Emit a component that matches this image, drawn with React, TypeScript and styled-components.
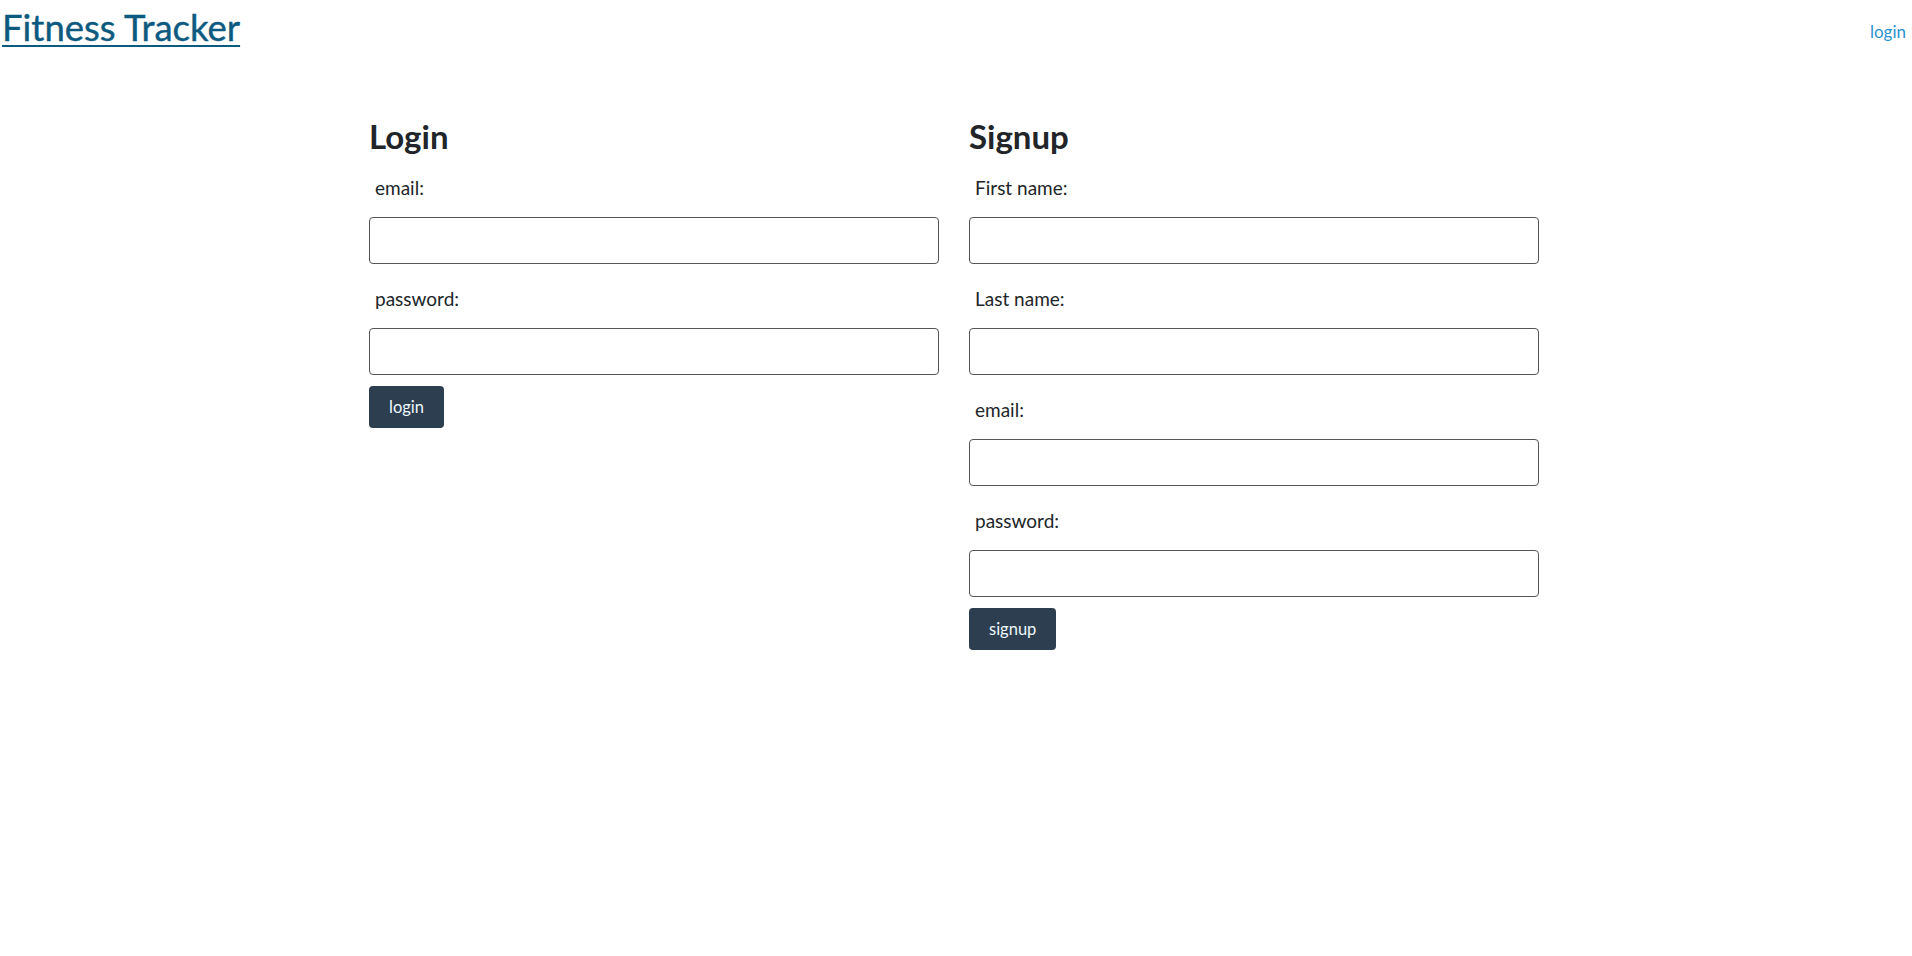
import React from "react";
import styled, { createGlobalStyle } from "styled-components";

const GlobalStyle = createGlobalStyle`
  html, body {
    margin: 0;
    padding: 0;
    background: #ffffff;
  }
  body {
    font-family: "Lato", "Noto Sans", sans-serif;
    color: #212529;
  }
  * { box-sizing: border-box; }
`;

const Header = styled.header`
  display: flex;
  justify-content: space-between;
  align-items: flex-start;
  padding: 0 6px 0 2px;
`;

const Brand = styled.a`
  display: inline-block;
  margin-top: 6px;
  font-size: 36.5px;
  line-height: 42px;
  font-weight: 400;
  -webkit-text-stroke: 0.4px #0d5a80;
  color: #0d5a80;
  text-decoration: underline;
  text-decoration-thickness: 2px;
  text-underline-offset: 4px;
`;

const NavLink = styled.a`
  margin-top: 22px;
  font-size: 17px;
  line-height: 20px;
  color: #2b93d3;
  text-decoration: none;
`;

const Main = styled.main`
  display: grid;
  grid-template-columns: 570px 570px;
  column-gap: 30px;
  width: 1174px;
  margin: 68px auto 0;
`;

const Panel = styled.section`
  display: flex;
  flex-direction: column;
  align-items: flex-start;
`;

const Title = styled.h2`
  margin: 0 0 19px;
  font-size: 33px;
  line-height: 40px;
  font-weight: 700;
  color: #212529;
`;

const Field = styled.div`
  display: flex;
  flex-direction: column;
  width: 100%;
  & + & {
    margin-top: 22px;
  }
`;

const Label = styled.label`
  padding-left: 6px;
  font-size: 19px;
  line-height: 26px;
  margin-bottom: 16px;
`;

const Input = styled.input`
  width: 100%;
  height: 47px;
  border: 1px solid #555555;
  border-radius: 4px;
  padding: 6px 12px;
  font-family: inherit;
  font-size: 16px;
  background: #ffffff;
`;

const Button = styled.button`
  margin-top: 11px;
  height: 42px;
  padding: 0 20px;
  border: none;
  border-radius: 4px;
  background: #2c3e50;
  color: #eef8ff;
  font-family: inherit;
  font-size: 16.5px;
  cursor: pointer;
`;

type FieldDef = { id: string; label: string; type?: string };

const loginFields: FieldDef[] = [
  { id: "login-email", label: "email:" },
  { id: "login-password", label: "password:", type: "password" },
];

const signupFields: FieldDef[] = [
  { id: "signup-first", label: "First name:" },
  { id: "signup-last", label: "Last name:" },
  { id: "signup-email", label: "email:" },
  { id: "signup-password", label: "password:", type: "password" },
];

function Form({ title, fields, action }: { title: string; fields: FieldDef[]; action: string }) {
  return (
    <Panel>
      <Title>{title}</Title>
      {fields.map((f) => (
        <Field key={f.id}>
          <Label htmlFor={f.id}>{f.label}</Label>
          <Input id={f.id} type={f.type ?? "text"} />
        </Field>
      ))}
      <Button type="button">{action}</Button>
    </Panel>
  );
}

export default function App() {
  return (
    <>
      <GlobalStyle />
      <Header>
        <Brand href="#">Fitness Tracker</Brand>
        <NavLink href="#">login</NavLink>
      </Header>
      <Main>
        <Form title="Login" fields={loginFields} action="login" />
        <Form title="Signup" fields={signupFields} action="signup" />
      </Main>
    </>
  );
}
